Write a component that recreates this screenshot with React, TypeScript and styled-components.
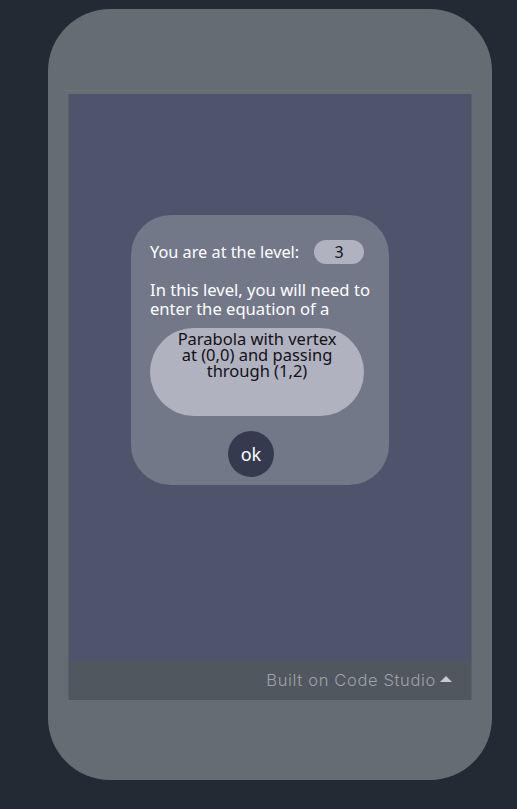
import React from "react";
import styled, { createGlobalStyle } from "styled-components";

const Global = createGlobalStyle`
  html, body { margin: 0; padding: 0; background: #222a33; }
  body { width: 517px; height: 809px; overflow: hidden; }
  #root { width: 517px; height: 809px; }
`;

const Page = styled.div`
  width: 517px;
  height: 809px;
  padding: 9px 0 0 48px;
  box-sizing: border-box;
  background: #222a33;
`;

const Phone = styled.div`
  width: 444px;
  height: 771px;
  border-radius: 62px;
  background: #636d72;
  box-sizing: border-box;
  padding: 81px 0 0 20px;
  display: flex;
  flex-direction: column;
`;

const ScreenEdge = styled.div`
  height: 4px;
  margin-left: -4px;
  width: 408px;
  background: #646e73;
  border-top: 1px solid #6b747a;
  box-sizing: border-box;
`;

const Screen = styled.div`
  width: 404px;
  height: 606px;
  display: flex;
  flex-direction: column;
  background: #4f536b;
  border-left: 1px solid #596072;
  border-right: 1px solid #596072;
  box-sizing: border-box;
`;

const Stage = styled.div`
  flex: 1;
  padding: 121px 0 0 62px;
`;

const Dialog = styled.div`
  width: 258px;
  height: 270px;
  box-sizing: border-box;
  border-radius: 40px;
  background: #737889;
  padding: 25px 0 0 19px;
  display: flex;
  flex-direction: column;
  font-family: "Noto Sans", "Open Sans", sans-serif;
  color: #ffffff;
`;

const LevelRow = styled.div`
  display: flex;
  align-items: center;
  height: 24px;
`;

const Label = styled.span`
  font-size: 16.3px;
  line-height: 24px;
  width: 164px;
`;

const LevelPill = styled.div`
  width: 50px;
  height: 24px;
  border-radius: 12px;
  background: #b1b2bf;
  color: #151520;
  font-size: 16px;
  line-height: 24px;
  text-align: center;
`;

const Intro = styled.p`
  margin: 16px 0 0 0;
  font-size: 16.6px;
  line-height: 19px;
  width: 232px;
`;

const Task = styled.div`
  margin-top: 10px;
  width: 214px;
  height: 88px;
  border-radius: 44px;
  background: #b1b2bf;
  color: #111118;
  font-size: 16.5px;
  line-height: 16px;
  text-align: center;
  box-sizing: border-box;
  padding: 3px 24px 0;
`;

const OkButton = styled.button`
  margin: 15px 0 0 78px;
  width: 46px;
  height: 46px;
  border-radius: 50%;
  border: none;
  padding: 0;
  background: #363a4f;
  color: #ffffff;
  font-family: "Noto Sans", "Open Sans", sans-serif;
  font-size: 18px;
  line-height: 46px;
  text-align: center;
`;

const Footer = styled.div`
  height: 40px;
  background: #51575e;
  display: flex;
  align-items: center;
  justify-content: flex-end;
  padding-right: 19px;
  gap: 4px;
  font-family: "Inter", "Lato", sans-serif;
  font-weight: 300;
  font-size: 16.5px;
  letter-spacing: 0.65px;
  color: #9ea3a9;
`;

const Caret = styled.svg`
  width: 12px;
  height: 8px;
  margin-bottom: 3px;
`;

export default function App() {
  return (
    <>
      <Global />
      <Page>
        <Phone>
          <ScreenEdge />
          <Screen>
            <Stage>
              <Dialog>
                <LevelRow>
                  <Label>You are at the level:</Label>
                  <LevelPill>3</LevelPill>
                </LevelRow>
                <Intro>
                  In this level, you will need to enter the equation of a
                </Intro>
                <Task>Parabola with vertex at (0,0) and passing through (1,2)</Task>
                <OkButton>ok</OkButton>
              </Dialog>
            </Stage>
            <Footer>
              <span>Built on Code Studio</span>
              <Caret viewBox="0 0 12 8">
                <path d="M0 7 L6 1 L12 7 Z" fill="#c8ccd0" />
              </Caret>
            </Footer>
          </Screen>
        </Phone>
      </Page>
    </>
  );
}
